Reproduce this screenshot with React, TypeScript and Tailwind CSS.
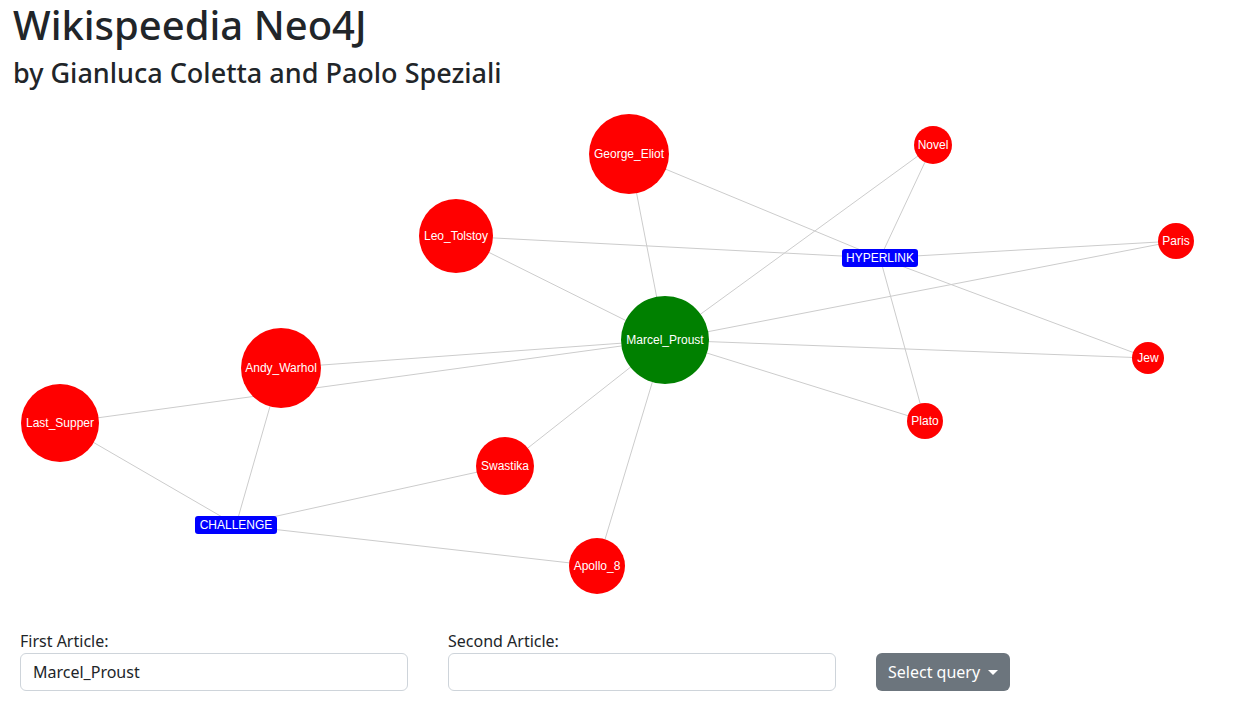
const nodes: { id: string; x: number; y: number; r: number; color?: string }[] = [
  { id: "George_Eliot", x: 629, y: 154, r: 40 },
  { id: "Novel", x: 933, y: 145, r: 19 },
  { id: "Leo_Tolstoy", x: 456, y: 236, r: 37 },
  { id: "Paris", x: 1176, y: 241, r: 18 },
  { id: "Marcel_Proust", x: 665, y: 340, r: 44, color: "#008000" },
  { id: "Andy_Warhol", x: 281, y: 368, r: 40 },
  { id: "Jew", x: 1148, y: 358, r: 16 },
  { id: "Last_Supper", x: 60, y: 423, r: 39 },
  { id: "Plato", x: 925, y: 421, r: 18 },
  { id: "Swastika", x: 505, y: 466, r: 29 },
  { id: "Apollo_8", x: 597, y: 566, r: 28 },
];

const rels: { id: string; x: number; y: number; w: number }[] = [
  { id: "HYPERLINK", x: 880, y: 258, w: 76 },
  { id: "CHALLENGE", x: 236, y: 525, w: 82 },
];

const edges: [string, string][] = [
  ["George_Eliot", "Marcel_Proust"],
  ["George_Eliot", "HYPERLINK"],
  ["Novel", "Marcel_Proust"],
  ["Novel", "HYPERLINK"],
  ["Leo_Tolstoy", "HYPERLINK"],
  ["Leo_Tolstoy", "Marcel_Proust"],
  ["Paris", "HYPERLINK"],
  ["Paris", "Marcel_Proust"],
  ["HYPERLINK", "Jew"],
  ["HYPERLINK", "Plato"],
  ["Marcel_Proust", "Jew"],
  ["Marcel_Proust", "Plato"],
  ["Marcel_Proust", "Andy_Warhol"],
  ["Marcel_Proust", "Last_Supper"],
  ["Marcel_Proust", "Swastika"],
  ["Marcel_Proust", "Apollo_8"],
  ["Andy_Warhol", "CHALLENGE"],
  ["Last_Supper", "CHALLENGE"],
  ["Swastika", "CHALLENGE"],
  ["CHALLENGE", "Apollo_8"],
];

const pos = (id: string) => {
  const n = nodes.find((n) => n.id === id) ?? rels.find((r) => r.id === id)!;
  return { x: n.x, y: n.y };
};

function Graph() {
  return (
    <svg className="block" width={1243} height={531} viewBox="0 98 1243 531">
      {edges.map(([a, b]) => {
        const p = pos(a);
        const q = pos(b);
        return <line key={a + b} x1={p.x} y1={p.y} x2={q.x} y2={q.y} stroke="#cccccc" strokeWidth={1} />;
      })}
      {nodes.map((n) => (
        <g key={n.id}>
          <circle cx={n.x} cy={n.y} r={n.r} fill={n.color ?? "#ff0000"} />
          <text
            x={n.x}
            y={n.y + 4}
            textAnchor="middle"
            fill="#ffffff"
            fontSize={12}
            fontFamily="'Liberation Sans', Arial, sans-serif"
          >
            {n.id}
          </text>
        </g>
      ))}
      {rels.map((r) => (
        <g key={r.id}>
          <rect x={r.x - r.w / 2} y={r.y - 9} width={r.w} height={18} rx={3} fill="#0000ff" />
          <text
            x={r.x}
            y={r.y + 4}
            textAnchor="middle"
            fill="#ffffff"
            fontSize={12}
            fontFamily="'Liberation Sans', Arial, sans-serif"
          >
            {r.id}
          </text>
        </g>
      ))}
    </svg>
  );
}

export default function App() {
  return (
    <div className="min-h-[705px] bg-white text-[#212529] font-['Noto_Sans',sans-serif]">
      <div className="px-[13px]">
        <h1 className="text-[40px] leading-[50px] font-medium mb-[6px]">Wikispeedia Neo4J</h1>
        <h3 className="text-[27px] leading-[34px] font-medium">by Gianluca Coletta and Paolo Speziali</h3>
      </div>
      <div className="mt-2">
        <Graph />
      </div>
      <div className="flex items-end gap-10 px-5">
        <div className="w-[388px]">
          <label className="block text-base leading-6">First Article:</label>
          <input
            defaultValue="Marcel_Proust"
            className="w-full h-[38px] px-3 border border-[#ced4da] rounded-md text-base text-[#212529] outline-none"
          />
        </div>
        <div className="w-[388px]">
          <label className="block text-base leading-6">Second Article:</label>
          <input className="w-full h-[38px] px-3 border border-[#ced4da] rounded-md text-base outline-none" />
        </div>
        <button className="h-[38px] px-3 rounded-md bg-[#6c757d] text-white text-base flex items-center gap-2">
          Select query
          <span className="w-0 h-0 border-l-[5px] border-r-[5px] border-t-[5px] border-l-transparent border-r-transparent border-t-white" />
        </button>
      </div>
    </div>
  );
}
